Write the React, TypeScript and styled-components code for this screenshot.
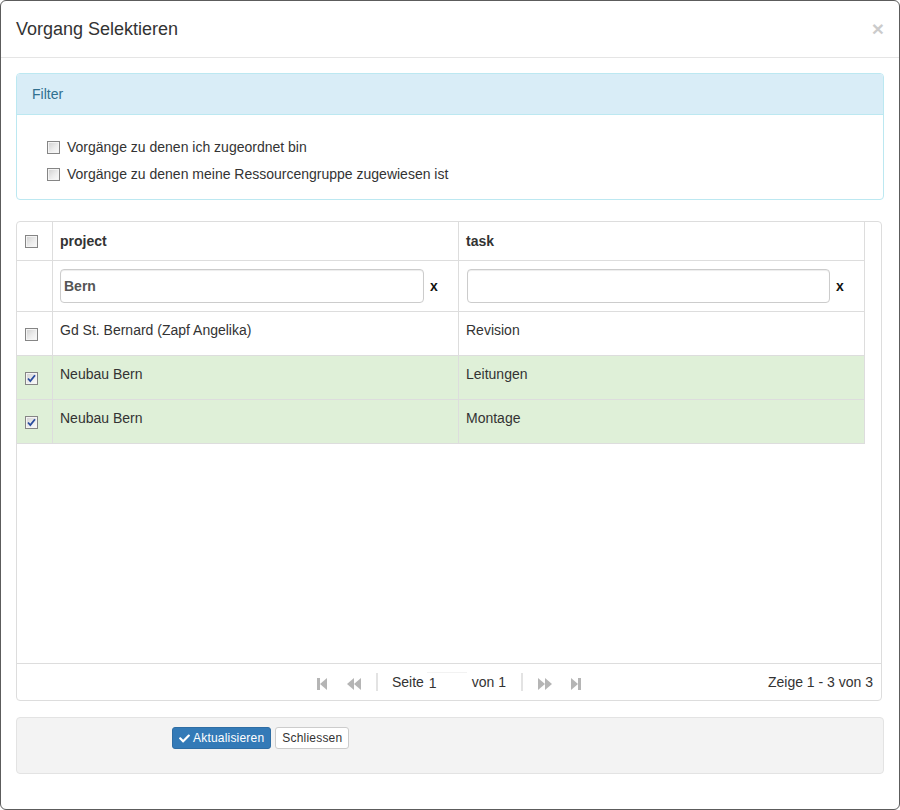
import React from "react";
import styled, { createGlobalStyle } from "styled-components";
import { FaCheck } from "react-icons/fa";

const GlobalStyle = createGlobalStyle`
  html, body {
    margin: 0;
    padding: 0;
    background: #ffffff;
  }
  body {
    font-family: "Liberation Sans", Arial, Helvetica, sans-serif;
    font-size: 14px;
    line-height: 20px;
    color: #333333;
  }
  * {
    box-sizing: border-box;
  }
`;

const Modal = styled.div`
  width: 900px;
  height: 810px;
  border: 1px solid #5c5c5c;
  border-radius: 6px;
  background: #ffffff;
  display: flex;
  flex-direction: column;
  overflow: hidden;
`;

const ModalHeader = styled.div`
  display: flex;
  justify-content: space-between;
  align-items: flex-start;
  padding: 15px;
  border-bottom: 1px solid #e5e5e5;
`;

const ModalTitle = styled.h4`
  margin: 0;
  font-size: 18px;
  font-weight: 400;
  line-height: 26px;
  color: #333333;
`;

const CloseButton = styled.span`
  font-size: 21px;
  font-weight: 700;
  line-height: 1;
  color: #000000;
  opacity: 0.2;
  margin-top: 2px;
`;

const ModalBody = styled.div`
  padding: 15px;
  display: flex;
  flex-direction: column;
`;

const Panel = styled.div`
  border: 1px solid #bce8f1;
  border-radius: 4px;
  overflow: hidden;
`;

const PanelHeading = styled.div`
  background: #d9edf7;
  color: #31708f;
  padding: 10px 15px;
  border-bottom: 1px solid #bce8f1;
`;

const PanelBody = styled.div`
  padding: 22px 15px 15px;
  display: flex;
  flex-direction: column;
  gap: 7px;
`;

const CheckLine = styled.label`
  display: flex;
  align-items: center;
  gap: 7px;
  margin-left: 15px;
  height: 20px;
`;

const Box = styled.span`
  display: inline-flex;
  align-items: center;
  justify-content: center;
  width: 13px;
  height: 13px;
  flex: none;
  border: 1px solid #858585;
  background: linear-gradient(135deg, #cfcfcf 0%, #ececec 55%, #fbfbfb 100%);
  box-shadow: inset 0 0 0 1px #f4f4f4;
`;

const Checkbox = ({ checked }: { checked?: boolean }) => (
  <Box>
    {checked && (
      <svg width="9" height="9" viewBox="0 0 9 9">
        <path d="M1 4.5 L3.3 7 L8 1.2" fill="none" stroke="#2a4d9e" strokeWidth="1.8" />
      </svg>
    )}
  </Box>
);

const GridBox = styled.div`
  margin-top: 21px;
  margin-right: 2px;
  height: 480px;
  border: 1px solid #dddddd;
  border-radius: 4px;
  display: flex;
  flex-direction: column;
`;

const GridScroll = styled.div`
  flex: 1;
  padding-right: 16px;
`;

const Row = styled.div<{ $height: number; $selected?: boolean }>`
  display: grid;
  grid-template-columns: 36px 406px 406px;
  height: ${(p) => p.$height}px;
  border-bottom: 1px solid #dddddd;
  background: ${(p) => (p.$selected ? "#dff0d8" : "transparent")};
`;

const Cell = styled.div<{ $align?: "top" | "center"; $bold?: boolean }>`
  border-right: 1px solid #dddddd;
  padding: ${(p) => (p.$align === "top" ? "8px 8px 0 7px" : "0 8px 0 7px")};
  display: flex;
  align-items: ${(p) => (p.$align === "top" ? "flex-start" : "center")};
  font-weight: ${(p) => (p.$bold ? 700 : 400)};
`;

const CheckCell = styled.div<{ $top?: number }>`
  border-right: 1px solid #dddddd;
  padding-left: 8px;
  padding-top: ${(p) => (p.$top ? `${p.$top}px` : "0")};
  display: flex;
  align-items: ${(p) => (p.$top ? "flex-start" : "center")};
`;

const FilterCell = styled.div<{ $left: number }>`
  border-right: 1px solid #dddddd;
  padding: 8px 20px 8px ${(p) => p.$left}px;
  display: flex;
  align-items: center;
`;

const FilterInput = styled.input`
  flex: 1;
  min-width: 0;
  height: 34px;
  border: 1px solid #cccccc;
  border-radius: 4px;
  padding: 0 3px;
  font-family: inherit;
  font-size: 14px;
  font-weight: 700;
  color: #555555;
  box-shadow: inset 0 1px 1px rgba(0, 0, 0, 0.075);
  outline: none;
`;

const ClearX = styled.span`
  font-weight: 700;
  color: #111111;
  margin-left: 6px;
  width: 8px;
`;

const Pager = styled.div`
  height: 37px;
  border-top: 1px solid #dddddd;
  display: grid;
  grid-template-columns: 1fr auto 1fr;
  align-items: center;
  padding: 0 8px 0 0;
`;

const PagerGroup = styled.div`
  grid-column: 2;
  display: flex;
  align-items: center;
  padding-left: 8px;
`;

const PagerBtn = styled.span<{ $ml?: number }>`
  width: 22px;
  height: 20px;
  display: inline-flex;
  align-items: center;
  justify-content: center;
  margin-left: ${(p) => p.$ml ?? 0}px;
  margin-top: 3px;
`;

const Sep = styled.span<{ $ml: number }>`
  width: 2px;
  height: 18px;
  background: #e3e3e3;
  margin-left: ${(p) => p.$ml}px;
`;

const PagerText = styled.span<{ $ml: number }>`
  margin-left: ${(p) => p.$ml}px;
`;

const PageInput = styled.input`
  width: 40px;
  height: 20px;
  margin-left: 3px;
  border: none;
  border-top: 1px solid #f2f2f2;
  padding: 0 2px;
  font-family: inherit;
  font-size: 14px;
  color: #333333;
  background: transparent;
  outline: none;
`;

const RecordInfo = styled.span`
  grid-column: 3;
  justify-self: end;
`;

const Well = styled.div`
  margin-top: 16px;
  height: 57px;
  background: #f3f3f3;
  border: 1px solid #e3e3e3;
  border-radius: 4px;
  padding: 9px 0 0 155px;
  display: flex;
  align-items: flex-start;
  gap: 4px;
`;

const Button = styled.button<{ $primary?: boolean }>`
  height: 22px;
  padding: 1px 6px;
  font-family: inherit;
  font-size: 12px;
  line-height: 18px;
  letter-spacing: 0.2px;
  border-radius: 3px;
  border: 1px solid ${(p) => (p.$primary ? "#2e6da4" : "#cccccc")};
  background: ${(p) => (p.$primary ? "#337ab7" : "#ffffff")};
  color: ${(p) => (p.$primary ? "#ffffff" : "#333333")};
  display: inline-flex;
  align-items: center;
  gap: 3px;
`;

const iconColor = "#b5b5b5";

const FirstIcon = () => (
  <svg width="10" height="12" viewBox="0 0 10 12">
    <rect x="0" y="0" width="3" height="12" fill={iconColor} />
    <polygon points="3,6 10,0 10,12" fill={iconColor} />
  </svg>
);

const PrevIcon = () => (
  <svg width="14" height="12" viewBox="0 0 14 12">
    <polygon points="0,6 7,0 7,12" fill={iconColor} />
    <polygon points="7,6 14,0 14,12" fill={iconColor} />
  </svg>
);

const NextIcon = () => (
  <svg width="14" height="12" viewBox="0 0 14 12">
    <polygon points="0,0 7,6 0,12" fill={iconColor} />
    <polygon points="7,0 14,6 7,12" fill={iconColor} />
  </svg>
);

const LastIcon = () => (
  <svg width="10" height="12" viewBox="0 0 10 12">
    <polygon points="0,0 7,6 0,12" fill={iconColor} />
    <rect x="7" y="0" width="3" height="12" fill={iconColor} />
  </svg>
);

const rows = [
  { project: "Gd St. Bernard (Zapf Angelika)", task: "Revision", selected: false },
  { project: "Neubau Bern", task: "Leitungen", selected: true },
  { project: "Neubau Bern", task: "Montage", selected: true },
];

export default function App() {
  return (
    <>
      <GlobalStyle />
      <Modal>
        <ModalHeader>
          <ModalTitle>Vorgang Selektieren</ModalTitle>
          <CloseButton>×</CloseButton>
        </ModalHeader>
        <ModalBody>
          <Panel>
            <PanelHeading>Filter</PanelHeading>
            <PanelBody>
              <CheckLine>
                <Checkbox />
                Vorgänge zu denen ich zugeordnet bin
              </CheckLine>
              <CheckLine>
                <Checkbox />
                Vorgänge zu denen meine Ressourcengruppe zugewiesen ist
              </CheckLine>
            </PanelBody>
          </Panel>

          <GridBox>
            <GridScroll>
              <Row $height={39}>
                <CheckCell>
                  <Checkbox />
                </CheckCell>
                <Cell $bold>project</Cell>
                <Cell $bold>task</Cell>
              </Row>
              <Row $height={51}>
                <CheckCell />
                <FilterCell $left={7}>
                  <FilterInput defaultValue="Bern" />
                  <ClearX>x</ClearX>
                </FilterCell>
                <FilterCell $left={8}>
                  <FilterInput defaultValue="" />
                  <ClearX>x</ClearX>
                </FilterCell>
              </Row>
              {rows.map((r, i) => (
                <Row key={i} $height={44} $selected={r.selected}>
                  <CheckCell $top={16}>
                    <Checkbox checked={r.selected} />
                  </CheckCell>
                  <Cell $align="top">{r.project}</Cell>
                  <Cell $align="top">{r.task}</Cell>
                </Row>
              ))}
            </GridScroll>
            <Pager>
              <PagerGroup>
                <PagerBtn>
                  <FirstIcon />
                </PagerBtn>
                <PagerBtn $ml={10}>
                  <PrevIcon />
                </PagerBtn>
                <Sep $ml={11} />
                <PagerText $ml={14}>Seite</PagerText>
                <PageInput defaultValue="1" />
                <PagerText $ml={5}>von 1</PagerText>
                <Sep $ml={15} />
                <PagerBtn $ml={11}>
                  <NextIcon />
                </PagerBtn>
                <PagerBtn $ml={9}>
                  <LastIcon />
                </PagerBtn>
              </PagerGroup>
              <RecordInfo>Zeige 1 - 3 von 3</RecordInfo>
            </Pager>
          </GridBox>

          <Well>
            <Button $primary>
              <FaCheck size={11} />
              Aktualisieren
            </Button>
            <Button>Schliessen</Button>
          </Well>
        </ModalBody>
      </Modal>
    </>
  );
}
